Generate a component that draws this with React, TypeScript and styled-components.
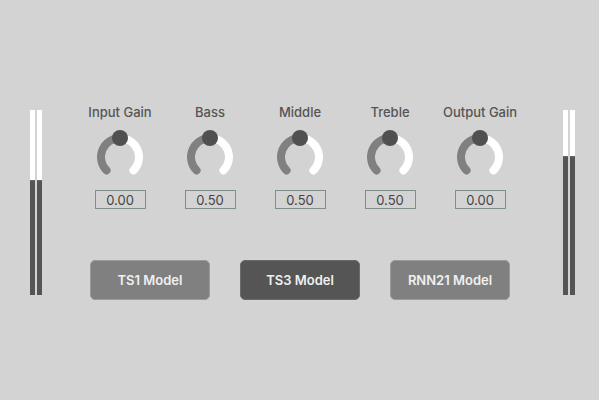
import React from "react";
import styled, { createGlobalStyle } from "styled-components";

const Global = createGlobalStyle`
  html, body { margin: 0; padding: 0; background: #d3d3d3; }
  body { font-family: Inter, "Noto Sans", sans-serif; }
`;

const Page = styled.div`
  width: 599px;
  height: 400px;
  box-sizing: border-box;
  display: flex;
  align-items: flex-start;
  padding: 110px 24px 0 30px;
  background: #d3d3d3;
`;

const Meter = styled.div`
  display: flex;
  gap: 2px;
  height: 185px;
`;

const MeterBar = styled.div`
  position: relative;
  width: 5px;
  height: 100%;
  background: #ffffff;
  display: flex;
  flex-direction: column;
  justify-content: flex-end;
`;

const MeterFill = styled.div`
  background: #555555;
  border-top: 1px solid #666666;
  box-sizing: border-box;
`;

const Center = styled.div`
  flex: 1;
  display: flex;
  flex-direction: column;
  align-items: flex-start;
  margin-top: -6px;
`;

const KnobRow = styled.div`
  display: flex;
  margin-left: 33px;
`;

const KnobCol = styled.div`
  width: 90px;
  display: flex;
  flex-direction: column;
  align-items: center;
`;

const Label = styled.div`
  font-size: 13px;
  line-height: 16px;
  font-weight: 500;
  color: #555555;
  white-space: nowrap;
`;

const KnobSvg = styled.svg`
  display: block;
  margin-top: 9px;
`;

const ValueBox = styled.div`
  margin-top: 5px;
  width: 51px;
  height: 19px;
  box-sizing: border-box;
  border: 1px solid #7e8e88;
  display: flex;
  align-items: center;
  justify-content: center;
  font-size: 13px;
  color: #444444;
`;

const ButtonRow = styled.div`
  display: flex;
  gap: 30px;
  margin-left: 48px;
  margin-top: 51px;
`;

const ModelButton = styled.button<{ $active?: boolean }>`
  width: 120px;
  height: 40px;
  border-radius: 5px;
  border: 1px solid ${(p) => (p.$active ? "#6a6a6a" : "#9a9a9a")};
  background: ${(p) => (p.$active ? "#555555" : "#808080")};
  color: #f0f0f0;
  font-family: Inter, "Noto Sans", sans-serif;
  font-size: 13px;
  font-weight: 600;
  padding: 0;
  cursor: pointer;
`;

const R = 19;
const C = 28;

function arcPoint(deg: number) {
  const a = (deg * Math.PI) / 180;
  return [C + R * Math.sin(a), C - R * Math.cos(a)];
}

function arcPath(from: number, to: number) {
  const [x1, y1] = arcPoint(from);
  const [x2, y2] = arcPoint(to);
  const large = Math.abs(to - from) > 180 ? 1 : 0;
  return `M ${x1} ${y1} A ${R} ${R} 0 ${large} 1 ${x2} ${y2}`;
}

const Knob: React.FC<{ angle: number }> = ({ angle }) => {
  const [dx, dy] = arcPoint(angle);
  return (
    <KnobSvg width={56} height={56} viewBox="0 0 56 56">
      <path d={arcPath(-135, angle)} stroke="#808080" strokeWidth={8} fill="none" strokeLinecap="round" />
      <path d={arcPath(angle, 135)} stroke="#ffffff" strokeWidth={8} fill="none" strokeLinecap="round" />
      <circle cx={dx} cy={dy} r={8} fill="#505050" />
    </KnobSvg>
  );
};

const knobs = [
  { label: "Input Gain", value: "0.00" },
  { label: "Bass", value: "0.50" },
  { label: "Middle", value: "0.50" },
  { label: "Treble", value: "0.50" },
  { label: "Output Gain", value: "0.00" },
];

const MeterPair: React.FC<{ level: number }> = ({ level }) => (
  <Meter>
    {[0, 1].map((i) => (
      <MeterBar key={i}>
        <MeterFill style={{ height: `${level}px` }} />
      </MeterBar>
    ))}
  </Meter>
);

export default function App() {
  return (
    <>
      <Global />
      <Page>
        <MeterPair level={115} />
        <Center>
          <KnobRow>
            {knobs.map((k) => (
              <KnobCol key={k.label}>
                <Label>{k.label}</Label>
                <Knob angle={0} />
                <ValueBox>{k.value}</ValueBox>
              </KnobCol>
            ))}
          </KnobRow>
          <ButtonRow>
            <ModelButton>TS1 Model</ModelButton>
            <ModelButton $active>TS3 Model</ModelButton>
            <ModelButton>RNN21 Model</ModelButton>
          </ButtonRow>
        </Center>
        <MeterPair level={139} />
      </Page>
    </>
  );
}
